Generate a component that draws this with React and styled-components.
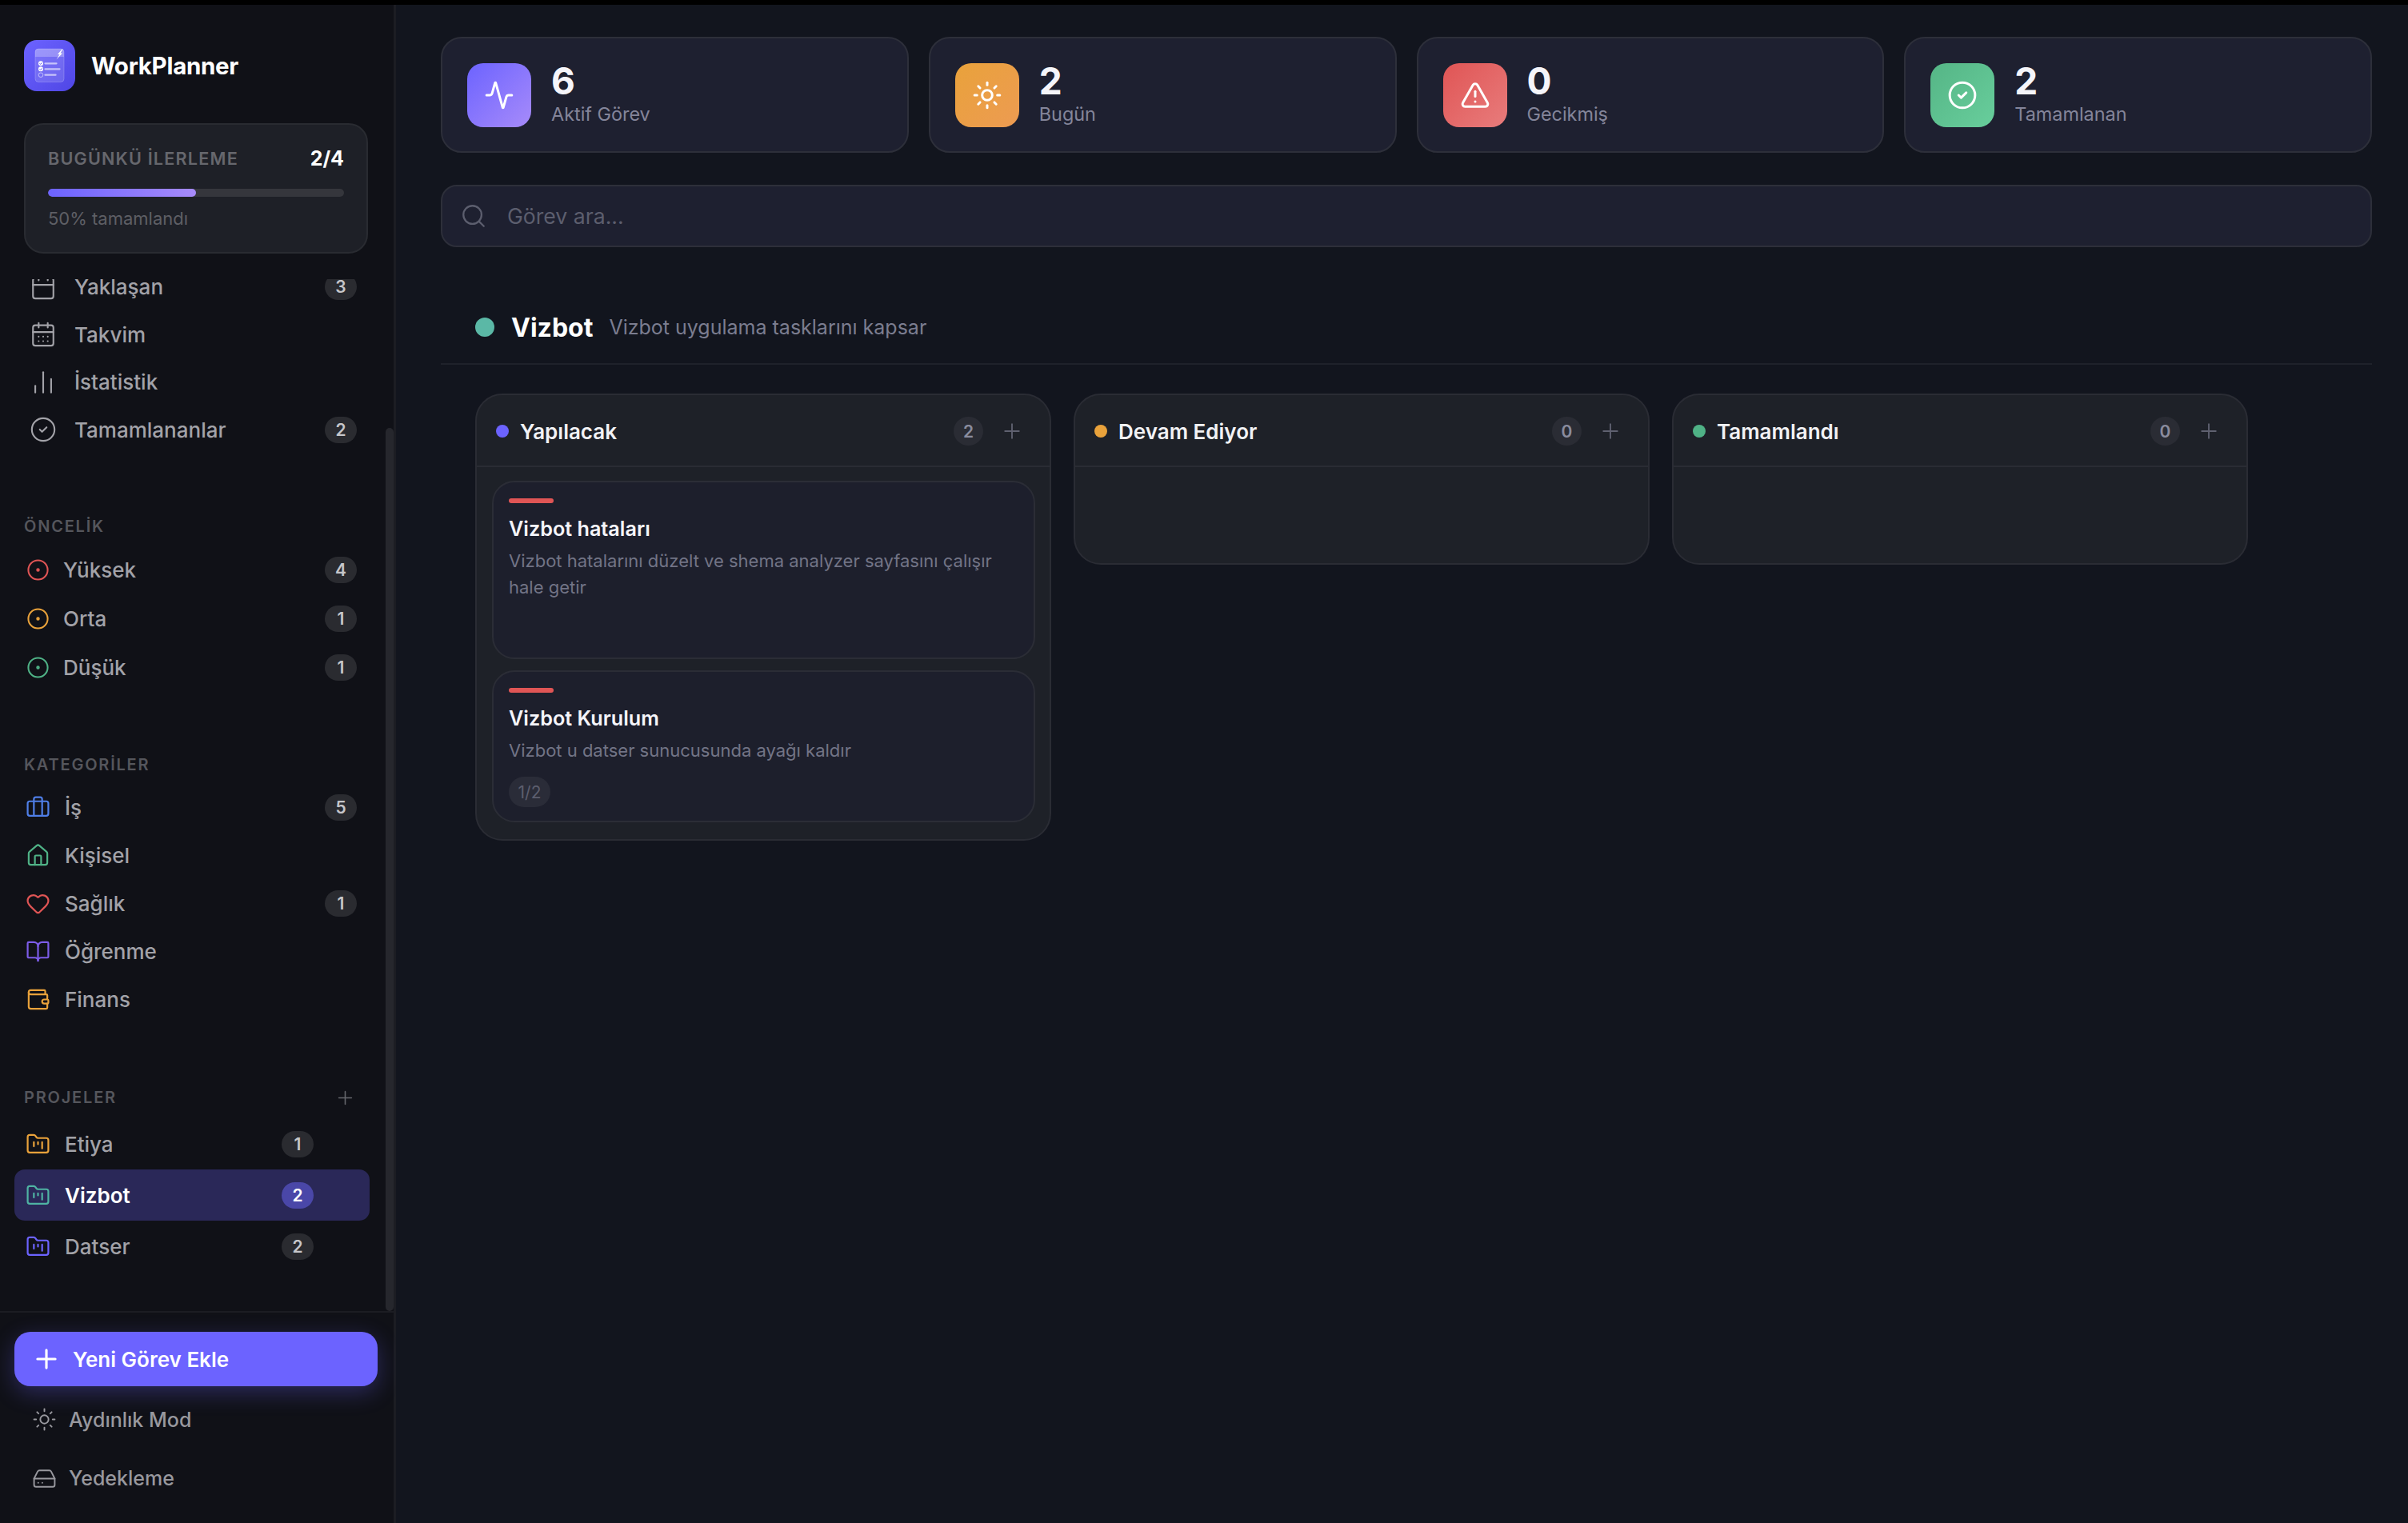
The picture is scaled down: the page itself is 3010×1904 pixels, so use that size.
import React from 'react';
import styled, { createGlobalStyle } from 'styled-components';
import {
  Activity, BookOpen, Briefcase, Calendar, CalendarDays, ChartNoAxesColumn, CircleCheck,
  CircleDot, FolderKanban, HardDrive, Heart, House, Plus, Search, Sun, TriangleAlert, Wallet,
} from 'lucide-react';

const GlobalStyle = createGlobalStyle`
  html, body { margin: 0; padding: 0; background: #000; }
  body { font-family: 'Inter', 'Noto Sans', sans-serif; -webkit-font-smoothing: antialiased; }
  * { box-sizing: border-box; }
`;

const Page = styled.div`
  width: 3010px;
  height: 1904px;
  padding-top: 6px;
  display: flex;
  overflow: hidden;
  background: #000;
`;

const Sidebar = styled.aside`
  width: 495px;
  flex-shrink: 0;
  display: flex;
  flex-direction: column;
  background: #101117;
  border-right: 3px solid #1c1d23;
`;

const Brand = styled.div`
  display: flex;
  align-items: center;
  gap: 20px;
  padding: 44px 30px 0;
`;

const BrandName = styled.div`
  font-size: 29.5px;
  font-weight: 700;
  letter-spacing: -0.3px;
  color: #fff;
`;

const ProgressCard = styled.div`
  margin: 40px 32px 32px 30px;
  height: 163px;
  padding: 28px 28px 0;
  background: #1e2027;
  border: 2px solid #292b31;
  border-radius: 24px;
`;

const ProgressHead = styled.div`
  display: flex;
  justify-content: space-between;
  align-items: center;
  height: 28px;
`;

const ProgressLabel = styled.span`
  font-size: 21.6px;
  font-weight: 600;
  letter-spacing: 1.2px;
  color: #66676d;
`;

const ProgressCount = styled.span`
  font-size: 25px;
  font-weight: 700;
  color: #fff;
`;

const Track = styled.div`
  height: 10px;
  margin-top: 24px;
  border-radius: 5px;
  background: #35363c;
  overflow: hidden;
`;

const Fill = styled.div`
  height: 100%;
  border-radius: 5px;
  background: linear-gradient(90deg, #6c63ff, #a78bfa);
`;

const ProgressNote = styled.div`
  margin-top: 14px;
  font-size: 22px;
  color: #5e5f65;
`;

const NavScroll = styled.div`
  position: relative;
  flex: 1;
  min-height: 0;
  overflow: hidden;
`;

const NavInner = styled.div`
  margin-top: -20px;
`;

const Thumb = styled.div`
  position: absolute;
  right: 0;
  top: 186px;
  bottom: 0;
  width: 10px;
  border-radius: 5px;
  background: #26272d;
`;

const Group = styled.section`
  margin-top: ${p => p.$top || 0}px;
  padding-right: 30px;
`;

const GroupLabel = styled.div`
  display: flex;
  justify-content: space-between;
  align-items: center;
  height: 26px;
  margin-bottom: ${p => p.$gap}px;
  padding: 0 17px 0 30px;
  font-size: 20px;
  font-weight: 600;
  letter-spacing: 1.8px;
  color: #55565c;
`;

const Row = styled.div`
  display: flex;
  align-items: center;
  height: ${p => p.$h}px;
  margin-left: 18px;
  padding-left: ${p => p.$pad}px;
  padding-right: ${p => p.$right}px;
  gap: ${p => p.$gap}px;
  font-size: 26px;
  font-weight: ${p => (p.$active ? 600 : 500)};
  color: ${p => (p.$active ? '#fff' : '#a2a2a8')};
  background: ${p => (p.$active ? '#2a2858' : 'transparent')};
  border-radius: 13px;
`;

const RowText = styled.span`
  flex: 1;
`;

const Badge = styled.span`
  min-width: 40px;
  height: 33px;
  padding: 0 13px;
  display: flex;
  align-items: center;
  justify-content: center;
  border-radius: 17px;
  font-size: 21px;
  font-weight: 600;
  color: ${p => (p.$active ? '#fff' : '#c6c6ca')};
  background: ${p => (p.$active ? '#4a47a8' : '#2a2b30')};
`;

const SidebarFoot = styled.div`
  height: 265px;
  padding: 24px 20px 0 18px;
  border-top: 2px solid #1c1d23;
`;

const AddButton = styled.div`
  display: flex;
  align-items: center;
  gap: 14px;
  height: 68px;
  margin-bottom: 5px;
  padding-left: 21px;
  background: #6c63ff;
  border-radius: 20px;
  box-shadow: 0 8px 28px rgba(108, 99, 255, 0.3);
  font-size: 26px;
  font-weight: 600;
  color: #fff;
`;

const FootLink = styled.div`
  display: flex;
  align-items: center;
  gap: 15px;
  height: 73.5px;
  padding-left: 22px;
  font-size: 25px;
  font-weight: 500;
  color: #98989e;
`;

const Main = styled.main`
  flex: 1;
  min-width: 0;
  padding: 40px 45px 0 56px;
  background: #12151e;
`;

const StatGrid = styled.div`
  display: grid;
  grid-template-columns: repeat(4, 1fr);
  gap: 25px;
`;

const StatCard = styled.div`
  display: flex;
  align-items: center;
  gap: 25px;
  height: 145px;
  padding: 0 31px;
  background: #1e2030;
  border: 2px solid #2d2f3a;
  border-radius: 26px;
`;

const StatTile = styled.div`
  width: 80px;
  height: 80px;
  flex-shrink: 0;
  display: flex;
  align-items: center;
  justify-content: center;
  border-radius: 20px;
  background: linear-gradient(135deg, ${p => p.$from}, ${p => p.$to});
`;

const StatText = styled.div`
  padding-bottom: 6px;
`;

const StatValue = styled.div`
  font-size: 46px;
  line-height: 54px;
  font-weight: 700;
  color: #f5f5fa;
`;

const StatLabel = styled.div`
  font-size: 23.4px;
  line-height: 30px;
  color: #84859a;
`;

const SearchBox = styled.div`
  display: flex;
  align-items: center;
  gap: 25px;
  height: 78px;
  margin-top: 40px;
  padding: 0 22px;
  background: #1e2030;
  border: 2px solid #2d2f3a;
  border-radius: 20px;
  font-size: 26.6px;
  color: #5c5e6e;
`;

const ProjectHead = styled.div`
  display: flex;
  align-items: center;
  height: 90px;
  margin-top: 57px;
  padding: 0 0 2px 43px;
  border-bottom: 2px solid #1f222b;
`;

const ProjectDot = styled.span`
  width: 24px;
  height: 24px;
  border-radius: 50%;
  background: #5bb8a6;
  margin-right: 21px;
`;

const ProjectName = styled.span`
  font-size: 32px;
  font-weight: 700;
  color: #fff;
  margin-right: 20px;
`;

const ProjectNote = styled.span`
  font-size: 25px;
  color: #7b7d90;
`;

const Board = styled.div`
  display: flex;
  align-items: flex-start;
  gap: 28px;
  margin-top: 36px;
  padding-left: 43px;
`;

const Column = styled.div`
  width: 720px;
  background: #1e2128;
  border: 2px solid #2a2c34;
  border-radius: 34px;
`;

const ColumnHead = styled.div`
  display: flex;
  align-items: center;
  height: 90px;
  padding: 2px 32px 0 24px;
  border-bottom: 2px solid #2a2c34;
`;

const ColumnDot = styled.span`
  width: 16px;
  height: 16px;
  border-radius: 50%;
  background: ${p => p.$color};
  margin-right: 14px;
`;

const ColumnTitle = styled.span`
  flex: 1;
  font-size: 26px;
  font-weight: 600;
  color: #f2f2f5;
`;

const ColumnCount = styled.span`
  width: 37px;
  height: 36px;
  display: flex;
  align-items: center;
  justify-content: center;
  border-radius: 50%;
  margin-right: 21px;
  font-size: 21px;
  font-weight: 600;
  color: #8a8c9e;
  background: #2a2c34;
`;

const ColumnBody = styled.div`
  display: flex;
  flex-direction: column;
  gap: 14px;
  min-height: 120px;
  padding: 17px 18px 21px 19px;
`;

const TaskCard = styled.div`
  min-height: ${p => p.$min || 0}px;
  padding: 20px 20px 17px 19px;
  background: #1d1f2c;
  border: 2px solid #2b2d36;
  border-radius: 28px;
`;

const TaskBar = styled.div`
  width: 56px;
  height: 6px;
  border-radius: 3px;
  background: #e05555;
`;

const TaskTitle = styled.div`
  margin-top: 16px;
  font-size: 25.2px;
  line-height: 32px;
  font-weight: 600;
  color: #f5f5fa;
`;

const TaskText = styled.div`
  margin-top: 8px;
  font-size: 22px;
  line-height: 33px;
  color: #727486;
`;

const TaskChip = styled.span`
  display: inline-flex;
  align-items: center;
  justify-content: center;
  width: 52px;
  height: 38px;
  margin-top: 16px;
  border-radius: 19px;
  font-size: 21px;
  color: #5c5e6e;
  background: #2a2c38;
`;

const Logo = () => (
  <svg width="64" height="64" viewBox="0 0 64 64">
    <defs>
      <linearGradient id="logoBg" x1="0" y1="0" x2="1" y2="1">
        <stop offset="0" stopColor="#6c63ff" />
        <stop offset="1" stopColor="#4f46e5" />
      </linearGradient>
    </defs>
    <rect width="64" height="64" rx="16" fill="url(#logoBg)" />
    <rect x="14" y="11" width="36" height="41.5" rx="4" fill="#fff" fillOpacity="0.14" stroke="#fff" strokeOpacity="0.2" />
    <path d="M14 15a4 4 0 0 1 4-4h28a4 4 0 0 1 4 4v6H14z" fill="#fff" fillOpacity="0.25" />
    <path d="M47.5 11.5l-5.5 6.5h2.5l-4 6.5 7.5-8h-2.5l3-5z" fill="#fff" />
    <circle cx="21" cy="29.3" r="3" fill="#fff" />
    <circle cx="21" cy="36.3" r="3" fill="#fff" />
    <circle cx="21" cy="43.7" r="2.8" fill="none" stroke="#fff" strokeOpacity="0.6" strokeWidth="0.9" />
    <path d="M19.6 29.3l1 1.1 1.9-2M19.6 36.3l1 1.1 1.9-2" fill="none" stroke="#4f46e5" strokeWidth="0.9" />
    <path d="M26.5 29.3h14M26.5 36.3h18M26.5 43.7h13" stroke="#fff" strokeOpacity="0.6" strokeWidth="2.3" strokeLinecap="round" />
  </svg>
);

const mainNav = [
  { label: 'Yaklaşan', Icon: Calendar, count: 3 },
  { label: 'Takvim', Icon: CalendarDays },
  { label: 'İstatistik', Icon: ChartNoAxesColumn },
  { label: 'Tamamlananlar', Icon: CircleCheck, count: 2 },
];

const priorities = [
  { label: 'Yüksek', color: '#e05555', count: 4 },
  { label: 'Orta', color: '#e9a23b', count: 1 },
  { label: 'Düşük', color: '#4fb286', count: 1 },
];

const categories = [
  { label: 'İş', Icon: Briefcase, color: '#4f7fe8', count: 5 },
  { label: 'Kişisel', Icon: House, color: '#4fb286' },
  { label: 'Sağlık', Icon: Heart, color: '#e05555', count: 1 },
  { label: 'Öğrenme', Icon: BookOpen, color: '#7c5ce8' },
  { label: 'Finans', Icon: Wallet, color: '#e9a23b' },
];

const projects = [
  { label: 'Etiya', color: '#e9a23b', count: 1 },
  { label: 'Vizbot', color: '#4fb3a3', count: 2, active: true },
  { label: 'Datser', color: '#6c63ff', count: 2 },
];

const stats = [
  { value: 6, label: 'Aktif Görev', Icon: Activity, from: '#6c63ff', to: '#a78bfa' },
  { value: 2, label: 'Bugün', Icon: Sun, from: '#e9a23b', to: '#ed9b52' },
  { value: 0, label: 'Gecikmiş', Icon: TriangleAlert, from: '#e05555', to: '#e87c7c' },
  { value: 2, label: 'Tamamlanan', Icon: CircleCheck, from: '#55b586', to: '#68ce9c' },
];

const columns = [
  {
    title: 'Yapılacak',
    color: '#6c63ff',
    tasks: [
      {
        title: 'Vizbot hataları',
        text: 'Vizbot hatalarını düzelt ve shema analyzer sayfasını çalışır hale getir',
        min: 223,
      },
      { title: 'Vizbot Kurulum', text: 'Vizbot u datser sunucusunda ayağı kaldır', chip: '1/2' },
    ],
  },
  { title: 'Devam Ediyor', color: '#e9a23b', tasks: [] },
  { title: 'Tamamlandı', color: '#4fb286', tasks: [] },
];

export default function App() {
  return (
    <Page>
      <GlobalStyle />
      <Sidebar>
        <Brand>
          <Logo />
          <BrandName>WorkPlanner</BrandName>
        </Brand>
        <ProgressCard>
          <ProgressHead>
            <ProgressLabel>BUGÜNKÜ İLERLEME</ProgressLabel>
            <ProgressCount>2/4</ProgressCount>
          </ProgressHead>
          <Track><Fill style={{ width: '50%' }} /></Track>
          <ProgressNote>50% tamamlandı</ProgressNote>
        </ProgressCard>
        <NavScroll>
          <NavInner>
            <Group>
              {mainNav.map(({ label, Icon, count }) => (
                <Row key={label} $h={59.5} $pad={19} $right={16} $gap={22}>
                  <Icon size={34} strokeWidth={1.5} color="#a2a2a8" />
                  <RowText>{label}</RowText>
                  {count && <Badge>{count}</Badge>}
                </Row>
              ))}
            </Group>
            <Group $top={78}>
              <GroupLabel $gap={10.5}>ÖNCELİK</GroupLabel>
              {priorities.map(({ label, color, count }) => (
                <Row key={label} $h={61} $pad={15} $right={16} $gap={17}>
                  <CircleDot size={29} strokeWidth={1.7} color={color} />
                  <RowText>{label}</RowText>
                  <Badge>{count}</Badge>
                </Row>
              ))}
            </Group>
            <Group $top={78.5}>
              <GroupLabel $gap={11}>KATEGORİLER</GroupLabel>
              {categories.map(({ label, Icon, color, count }) => (
                <Row key={label} $h={59.9} $pad={14} $right={16} $gap={18}>
                  <Icon size={31} strokeWidth={1.7} color={color} />
                  <RowText>{label}</RowText>
                  {count && <Badge>{count}</Badge>}
                </Row>
              ))}
            </Group>
            <Group $top={80}>
              <GroupLabel $gap={13}>
                PROJELER
                <Plus size={27} strokeWidth={1.4} color="#66676d" />
              </GroupLabel>
              {projects.map(({ label, color, count, active }) => (
                <Row key={label} $h={64} $pad={14} $right={70} $gap={18} $active={active}>
                  <FolderKanban size={31} strokeWidth={1.7} color={color} />
                  <RowText>{label}</RowText>
                  <Badge $active={active}>{count}</Badge>
                </Row>
              ))}
            </Group>
          </NavInner>
          <Thumb />
        </NavScroll>
        <SidebarFoot>
          <AddButton>
            <Plus size={38} strokeWidth={2} />
            Yeni Görev Ekle
          </AddButton>
          <FootLink><Sun size={31} strokeWidth={1.5} />Aydınlık Mod</FootLink>
          <FootLink><HardDrive size={31} strokeWidth={1.5} />Yedekleme</FootLink>
        </SidebarFoot>
      </Sidebar>
      <Main>
        <StatGrid>
          {stats.map(({ value, label, Icon, from, to }) => (
            <StatCard key={label}>
              <StatTile $from={from} $to={to}>
                <Icon size={38} strokeWidth={1.9} color="#fff" />
              </StatTile>
              <StatText>
                <StatValue>{value}</StatValue>
                <StatLabel>{label}</StatLabel>
              </StatText>
            </StatCard>
          ))}
        </StatGrid>
        <SearchBox>
          <Search size={34} strokeWidth={1.6} color="#5c5e6e" />
          Görev ara...
        </SearchBox>
        <ProjectHead>
          <ProjectDot />
          <ProjectName>Vizbot</ProjectName>
          <ProjectNote>Vizbot uygulama tasklarını kapsar</ProjectNote>
        </ProjectHead>
        <Board>
          {columns.map(col => (
            <Column key={col.title}>
              <ColumnHead>
                <ColumnDot $color={col.color} />
                <ColumnTitle>{col.title}</ColumnTitle>
                <ColumnCount>{col.tasks.length}</ColumnCount>
                <Plus size={30} strokeWidth={1.5} color="#5f6170" />
              </ColumnHead>
              <ColumnBody>
                {col.tasks.map(task => (
                  <TaskCard key={task.title} $min={task.min}>
                    <TaskBar />
                    <TaskTitle>{task.title}</TaskTitle>
                    <TaskText>{task.text}</TaskText>
                    {task.chip && <TaskChip>{task.chip}</TaskChip>}
                  </TaskCard>
                ))}
              </ColumnBody>
            </Column>
          ))}
        </Board>
      </Main>
    </Page>
  );
}
